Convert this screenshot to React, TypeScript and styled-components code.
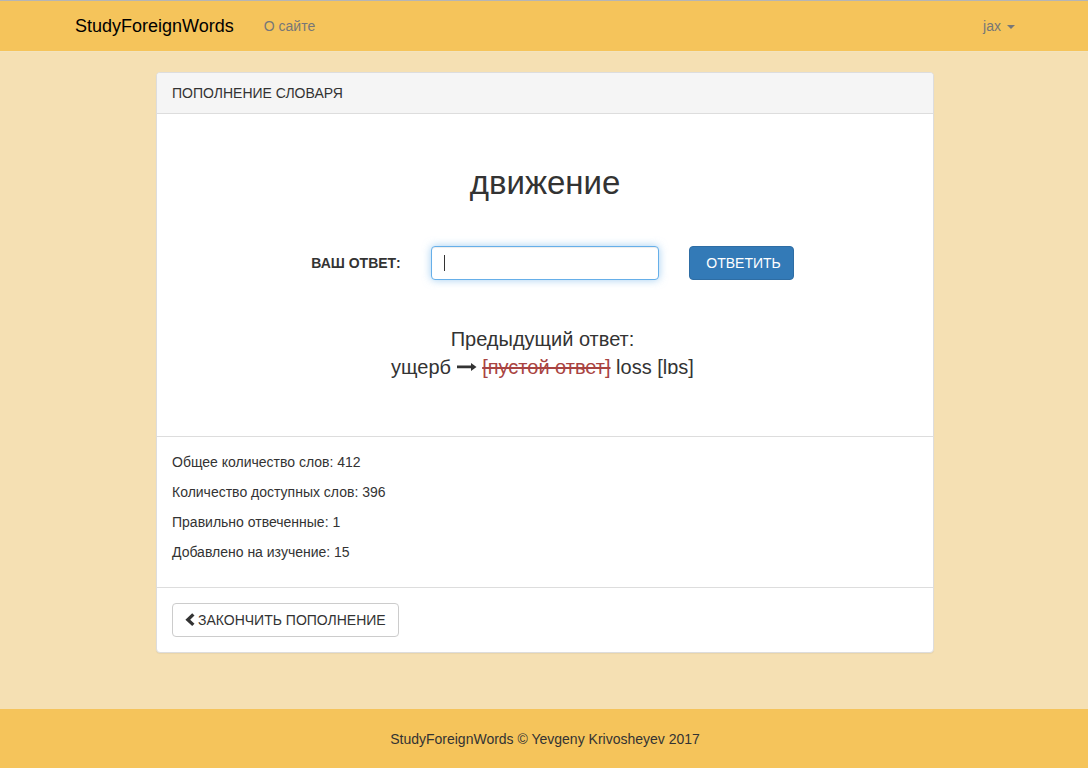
import React from "react";
import styled, { createGlobalStyle } from "styled-components";

const GlobalStyle = createGlobalStyle`
  *, *::before, *::after { box-sizing: border-box; }
  body {
    margin: 0;
    background: #f5e0b3;
    color: #333;
    font: 14px/20px "Liberation Sans", Arial, sans-serif;
  }
`;

const Page = styled.div`
  display: flex;
  flex-direction: column;
  min-height: 100vh;
`;

const Navbar = styled.header`
  background: #f5c45b;
  border-top: 1px solid #b5b5b5;
  border-bottom: 1px solid #f3e3bd;
`;

const Container = styled.div`
  width: 100%;
  max-width: 970px;
  margin: 0 auto;
  padding: 0 14px 0 16px;
`;

const NavRow = styled(Container)`
  display: flex;
  align-items: center;
  height: 50px;
`;

const Brand = styled.a`
  padding-right: 15px;
  color: #000;
  font-size: 18px;
  text-decoration: none;
`;

const NavLink = styled.a`
  padding: 0 15px;
  color: #777;
  text-decoration: none;
`;

const UserMenu = styled.button`
  display: flex;
  align-items: center;
  gap: 6px;
  margin-left: auto;
  padding: 0;
  border: 0;
  background: none;
  color: #777;
  font: inherit;
  cursor: pointer;
`;

const Caret = styled.span`
  margin-top: 2px;
  border-top: 4px solid currentColor;
  border-left: 4px solid transparent;
  border-right: 4px solid transparent;
`;

const Main = styled.main`
  flex: 1;
  width: 100%;
  max-width: 808px;
  margin: 0 auto;
  padding: 20px 14px 20px 16px;
`;

const Panel = styled.section`
  background: #fff;
  border: 1px solid #ddd;
  border-radius: 4px;
  box-shadow: 0 1px 1px rgba(0, 0, 0, 0.05);
`;

const PanelHeading = styled.h1`
  margin: 0;
  padding: 10px 15px;
  background: #f5f5f5;
  border-bottom: 1px solid #ddd;
  border-radius: 3px 3px 0 0;
  font-size: 14px;
  font-weight: 400;
  text-transform: uppercase;
`;

const Exercise = styled.div`
  padding: 49px 0 55px;
`;

const Word = styled.h2`
  margin: 0 0 43px;
  font-size: 33px;
  font-weight: 400;
  line-height: 40px;
  text-align: center;
`;

const AnswerForm = styled.form`
  display: grid;
  grid-template-columns: repeat(3, 1fr);
  align-items: center;
  margin-bottom: 45px;
`;

const Label = styled.label`
  padding: 0 15px;
  font-weight: 700;
  text-align: right;
  text-transform: uppercase;
`;

const Field = styled.div`
  position: relative;
  padding: 0 15px;
`;

const Input = styled.input`
  display: block;
  width: 100%;
  height: 34px;
  padding: 6px 12px;
  border: 1px solid #66afe9;
  border-radius: 4px;
  outline: 0;
  box-shadow: inset 0 1px 1px rgba(0, 0, 0, 0.075), 0 0 8px rgba(102, 175, 233, 0.6);
  color: #555;
  caret-color: transparent;
  font: inherit;

  &:not(:placeholder-shown) { caret-color: auto; }
  &:not(:placeholder-shown) + span { display: none; }
`;

const TextCursor = styled.span`
  position: absolute;
  top: 9px;
  left: 28px;
  width: 1px;
  height: 16px;
  background: #333;
  pointer-events: none;
`;

const Button = styled.button<{ $primary?: boolean }>`
  height: 34px;
  padding: ${(p) => (p.$primary ? "6px 12px 6px 16px" : "6px 12px")};
  border: 1px solid ${(p) => (p.$primary ? "#2e6da4" : "#ccc")};
  border-radius: 4px;
  background: ${(p) => (p.$primary ? "#337ab7" : "#fff")};
  color: ${(p) => (p.$primary ? "#fff" : "#333")};
  font: inherit;
  text-transform: uppercase;
  cursor: pointer;
`;

const Previous = styled.div`
  padding-right: 5px;
  font-size: 20px;
  line-height: 28px;
  text-align: center;

  p { margin: 0; }
  s { color: #a94442; }
`;

const ArrowIcon = styled.svg`
  width: 20px;
  height: 20px;
  vertical-align: -3px;
`;

const Stats = styled.div`
  padding: 15px;
  border-top: 1px solid #ddd;

  p { margin: 0 0 10px; }
`;

const Actions = styled.div`
  padding: 15px;
  border-top: 1px solid #ddd;
`;

const BackIcon = styled.svg`
  width: 10px;
  height: 14px;
  margin-right: 3px;
  vertical-align: -2px;
`;

const Footer = styled.footer`
  padding: 20px 14px 19px 16px;
  background: #f5c45b;
  text-align: center;
`;

const stats: [string, number][] = [
  ["Общее количество слов", 412],
  ["Количество доступных слов", 396],
  ["Правильно отвеченные", 1],
  ["Добавлено на изучение", 15],
];

export default function App() {
  return (
    <Page>
      <GlobalStyle />
      <Navbar>
        <NavRow as="nav">
          <Brand href="#">StudyForeignWords</Brand>
          <NavLink href="#about">О сайте</NavLink>
          <UserMenu type="button">
            jax <Caret />
          </UserMenu>
        </NavRow>
      </Navbar>
      <Main>
        <Panel>
          <PanelHeading>Пополнение словаря</PanelHeading>
          <Exercise>
            <Word>движение</Word>
            <AnswerForm onSubmit={(e) => e.preventDefault()}>
              <Label htmlFor="answer">Ваш ответ:</Label>
              <Field>
                <Input id="answer" type="text" placeholder=" " autoComplete="off" autoFocus />
                <TextCursor />
              </Field>
              <Field>
                <Button type="submit" $primary>
                  Ответить
                </Button>
              </Field>
            </AnswerForm>
            <Previous>
              <p>Предыдущий ответ:</p>
              <p>
                ущерб{" "}
                <ArrowIcon viewBox="0 0 20 20" aria-hidden="true">
                  <path d="M0 8.600h14V6L19.500 10 14 14V11.200H0z" fill="currentColor" />
                </ArrowIcon>{" "}
                <s>[пустой ответ]</s> loss [lɒs]
              </p>
            </Previous>
          </Exercise>
          <Stats>
            {stats.map(([label, value]) => (
              <p key={label}>
                {label}: {value}
              </p>
            ))}
          </Stats>
          <Actions>
            <Button type="button">
              <BackIcon viewBox="0 0 10 14" aria-hidden="true">
                <path d="M7.200 0.300 9.500 2.600 5.200 6.700 9.500 10.800 7.200 13.100 0.400 6.700z" fill="currentColor" />
              </BackIcon>
              Закончить пополнение
            </Button>
          </Actions>
        </Panel>
      </Main>
      <Footer>StudyForeignWords © Yevgeny Krivosheyev 2017</Footer>
    </Page>
  );
}
